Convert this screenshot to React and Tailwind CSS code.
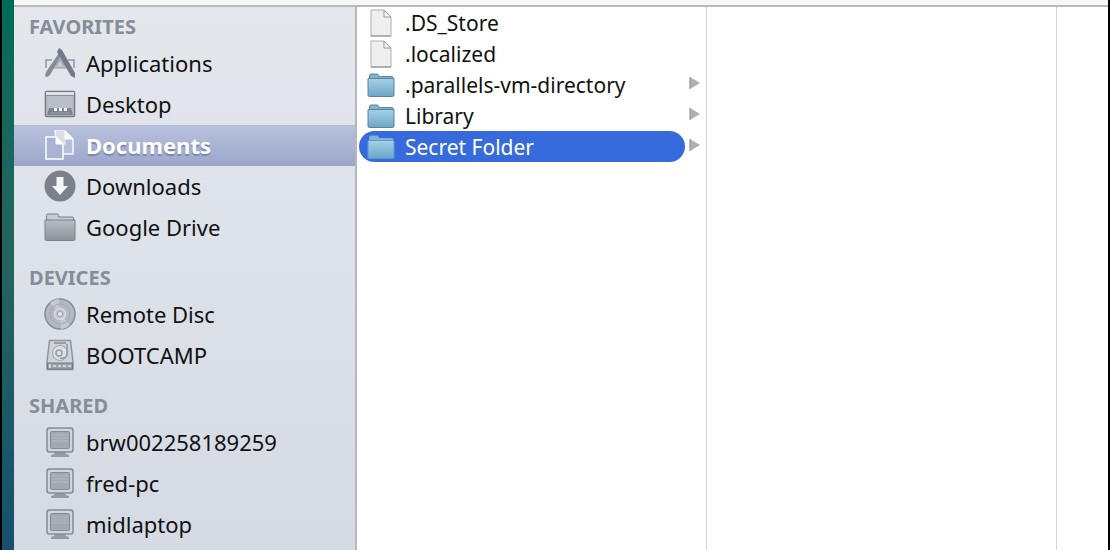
import React, { useState } from 'react';
import clsx from 'clsx';

const ApplicationsIcon = () => (
    <svg width="32" height="32" viewBox="0 0 32 32" fill="none" aria-hidden="true">
        <path d="M2 21v-8h6M30 21v-8h-6" stroke="#9197a2" strokeWidth="1.5" />
        <path d="M8 21l2-6h12l2 6z" fill="#bdc2ca" stroke="#949aa4" />
        <path d="M11 19l5-9 5 9z" fill="#a5abb4" />
        <path d="M17 3l2 2L6 28l-3 2-2-1 1-4z" fill="#858c97" />
        <path d="M13 5l2-4 3 2 13 23v5l-4-2z" fill="#737a85" />
        <path d="M13 19l3-5 3 5z" fill="#cbd0d6" />
    </svg>
);

const DesktopIcon = () => (
    <svg width="32" height="32" viewBox="0 0 32 32" aria-hidden="true">
        <rect x="1.5" y="3.5" width="29" height="25" rx="1" fill="#b9bfc8" stroke="#757c86" strokeWidth="1.5" />
        <path d="M2 5.500h28" stroke="#e8ebef" strokeWidth="2.5" />
        <path d="M2 7.500h28" stroke="#8b919b" />
        <path d="M5 20h22l2 7H3z" fill="#7d848e" />
        <path d="M10 20h3v3h-3zM15 20h3v3h-3zM20 20h3v3h-3z" fill="#f3f5f7" />
        <path d="M6 25h20" stroke="#9ba1aa" />
    </svg>
);

const DocumentsIcon = () => (
    <svg width="32" height="32" viewBox="0 0 32 32" aria-hidden="true">
        <path d="M11 2h10l8 8v15H15z" fill="#b4bdd9" stroke="#f7f8fc" strokeWidth="1.5" />
        <path d="M12 2h9l1 14-5-2-5-6z" fill="#dcdfe6" />
        <path d="M21 2v8h8z" fill="#f4f5f8" stroke="#fff" />
        <path d="M2 8h10l7 7v15H2z" fill="#a9b3d3" stroke="#fff" strokeWidth="1.5" />
        <path d="M12 8v7h7z" fill="#fff" stroke="#fff" />
    </svg>
);

const DownloadsIcon = () => (
    <svg width="32" height="32" viewBox="0 0 32 32" aria-hidden="true">
        <circle cx="16" cy="16" r="15.5" fill="#7b818b" />
        <path d="M12.500 7h7v9h4.500l-8 9-8-9h4.500z" fill="#f4f6f9" />
    </svg>
);

const GrayFolderIcon = () => (
    <svg width="32" height="32" viewBox="0 0 32 32" aria-hidden="true">
        <defs>
            <linearGradient id="gray-folder" x1="0" y1="0" x2="0" y2="1">
                <stop offset="0" stopColor="#b9bdc3" />
                <stop offset="1" stopColor="#8d9299" />
            </linearGradient>
        </defs>
        <path d="M2.500 9V4.500q0-1.500 1.500-1.500h9q1.500 0 1.500 1.500V6h14q1 0 1 1v4z" fill="#c9cdd3" stroke="#777d86" />
        <path d="M1 9h30v19q0 1.500-1.500 1.500h-27Q1 29.500 1 28z" fill="url(#gray-folder)" stroke="#7b8088" />
    </svg>
);

const DiscIcon = () => (
    <svg width="32" height="32" viewBox="0 0 32 32" fill="none" aria-hidden="true">
        <circle cx="16" cy="16" r="15" fill="#b4b8bf" stroke="#878d96" strokeWidth="1.5" />
        <path d="M16 16L6 5A15 15 0 0 1 15 1zM16 16l10 11a15 15 0 0 1-9 4z" fill="#c6cacf" />
        <circle cx="16" cy="16" r="10" stroke="#a4a9b1" />
        <circle cx="16" cy="16" r="5.500" fill="#bfc3c9" stroke="#d9dce0" strokeWidth="1.5" />
        <circle cx="16" cy="16" r="2.500" fill="#e9ebee" stroke="#999fa7" />
    </svg>
);

const DriveIcon = () => (
    <svg width="32" height="32" viewBox="0 0 32 32" fill="none" aria-hidden="true">
        <path d="M5.500 1.500h21L29 23v7.500H3V23z" fill="#cfd3d8" stroke="#8f959d" strokeWidth="1.5" />
        <path d="M3.500 24h25v6h-25z" fill="#9ca1a9" stroke="#757b84" />
        <path d="M6 25v4M9 27h3M14 27h3M19 27h3M24 27h3" stroke="#e2e5e9" strokeWidth="1.5" />
        <path d="M10 4h12" stroke="#848a93" strokeWidth="1.5" />
        <circle cx="16" cy="14" r="7.500" fill="#dde0e4" stroke="#a0a5ad" />
        <circle cx="15" cy="14" r="3" stroke="#989ea6" strokeWidth="1.5" />
        <path d="M23 5v11q-2 4-7 3" stroke="#9197a0" strokeWidth="1.5" />
    </svg>
);

const ComputerIcon = () => (
    <svg width="32" height="32" viewBox="0 0 32 32" aria-hidden="true">
        <path d="M11 26h10l1 2 3 1v2H7v-2l3-1z" fill="#959ba4" />
        <rect x="3" y="2" width="26" height="24" rx="2.500" fill="#d0d4dc" stroke="#858b95" strokeWidth="1.5" />
        <rect x="6.500" y="5.500" width="19" height="17" rx="1" fill="#a2a7b1" stroke="#858b96" />
        <path d="M8 9h16M8 12h16M8 15h16" stroke="#b5bac3" />
    </svg>
);

const FileIcon = () => (
    <svg width="22" height="28" viewBox="0 0 22 28" aria-hidden="true">
        <path d="M1 1h13l7 7v19H1z" fill="#efefef" stroke="#b0b0b0" />
        <path d="M14 1v7h7z" fill="#fff" stroke="#969696" />
        <path d="M1 27h20" stroke="#8c8c8c" />
    </svg>
);

const BlueFolderIcon = ({ selected }) => (
    <svg width="28" height="26" viewBox="0 0 28 26" aria-hidden="true">
        <defs>
            <linearGradient id="blue-folder" x1="0" y1="0" x2="0" y2="1">
                <stop offset="0" stopColor="#a5d0e8" />
                <stop offset="1" stopColor="#6ba6c6" />
            </linearGradient>
        </defs>
        <path d="M2.500 7V3.500Q2.500 2 4 2h6q1.500 0 1.500 1.500V4.500H25q1 0 1 1V8z" fill="#7fb4d2" stroke={selected ? '#79b1dd' : '#5d87a0'} />
        <path d="M1 6.500h26V23q0 1.500-1.500 1.500h-23Q1 24.500 1 23z" fill="url(#blue-folder)" stroke={selected ? '#5d98d3' : '#5d8298'} />
    </svg>
);

const sections = [
    {
        title: 'FAVORITES',
        items: [
            { name: 'Applications', Icon: ApplicationsIcon },
            { name: 'Desktop', Icon: DesktopIcon },
            { name: 'Documents', Icon: DocumentsIcon },
            { name: 'Downloads', Icon: DownloadsIcon },
            { name: 'Google Drive', Icon: GrayFolderIcon },
        ],
    },
    {
        title: 'DEVICES',
        items: [
            { name: 'Remote Disc', Icon: DiscIcon },
            { name: 'BOOTCAMP', Icon: DriveIcon },
        ],
    },
    {
        title: 'SHARED',
        items: [
            { name: 'brw002258189259', Icon: ComputerIcon },
            { name: 'fred-pc', Icon: ComputerIcon },
            { name: 'midlaptop', Icon: ComputerIcon },
        ],
    },
];

const files = [
    { name: '.DS_Store' },
    { name: '.localized' },
    { name: '.parallels-vm-directory', folder: true },
    { name: 'Library', folder: true },
    { name: 'Secret Folder', folder: true },
];

const Sidebar = ({ active, onSelect }) => (
    <nav className="w-[343px] shrink-0 border-r-2 border-[#b4b7bc] bg-linear-to-b from-[#e4e8ed] to-[#d5dae3]">
        {sections.map(({ title, items }) => (
            <section key={title} className="mb-2.5">
                <h2 className="pt-2 pb-1 pl-[15px] text-[20px] leading-6 font-bold text-[#858d98]">{title}</h2>
                <ul>
                    {items.map(({ name, Icon }) => (
                        <li key={name}>
                            <a
                                href="#"
                                aria-current={active === name ? 'page' : undefined}
                                onClick={() => onSelect(name)}
                                className={clsx(
                                    'flex h-[41px] items-center gap-2.5 pb-0.5 pl-[30px] text-[22px] leading-7',
                                    active === name
                                        ? 'border-t border-[#b3bbd0] bg-linear-to-b from-[#b8c1dd] to-[#9ca6ca] font-bold text-white text-shadow-[0_2px_1px_#7b86aa]'
                                        : 'text-[#111]'
                                )}
                            >
                                <Icon />
                                {name}
                            </a>
                        </li>
                    ))}
                </ul>
            </section>
        ))}
    </nav>
);

const FileRow = ({ file, selected, onSelect }) => (
    <li className="flex h-[31px] items-center gap-1 pl-0.5">
        <button
            type="button"
            onClick={() => onSelect(file.name)}
            className={clsx(
                'flex h-[31px] w-[326px] items-center gap-2.5 rounded-full pl-2 text-left text-[21px] leading-7',
                selected ? 'bg-[#376bdc] text-white' : 'text-[#111]'
            )}
        >
            <span className="flex w-7 justify-center">
                {file.folder ? <BlueFolderIcon selected={selected} /> : <FileIcon />}
            </span>
            {file.name}
        </button>
        {file.folder && (
            <svg width="12" height="14" viewBox="0 0 12 14" className="mb-1" aria-hidden="true">
                <path d="M1 1l10 6-10 6z" fill="#b0b0b0" />
                <path d="M1 1v12" stroke="#8c8c8c" />
            </svg>
        )}
    </li>
);

const App = () => {
    const [place, setPlace] = useState('Documents');
    const [file, setFile] = useState('Secret Folder');

    return (
        <div className="flex min-h-screen border-r-2 border-l-2 border-black bg-linear-to-b from-[#006b58] via-[#24635f] to-[#174f6d] pl-3 font-['Noto_Sans','Open_Sans',sans-serif]">
            <div className="flex min-w-0 flex-1 flex-col bg-white">
                <header className="h-[7px] border-b-2 border-[#b9b9b9] bg-[#f7f7f7]"></header>
                <div className="flex flex-1">
                    <Sidebar active={place} onSelect={setPlace} />
                    <ul className="w-[350px] shrink-0 border-r border-[#d5d5d5]">
                        {files.map((f) => (
                            <FileRow key={f.name} file={f} selected={file === f.name} onSelect={setFile} />
                        ))}
                    </ul>
                    <div className="w-[350px] shrink-0 border-r border-[#d5d5d5]"></div>
                    <div className="flex-1"></div>
                </div>
            </div>
        </div>
    );
};

export default App;
